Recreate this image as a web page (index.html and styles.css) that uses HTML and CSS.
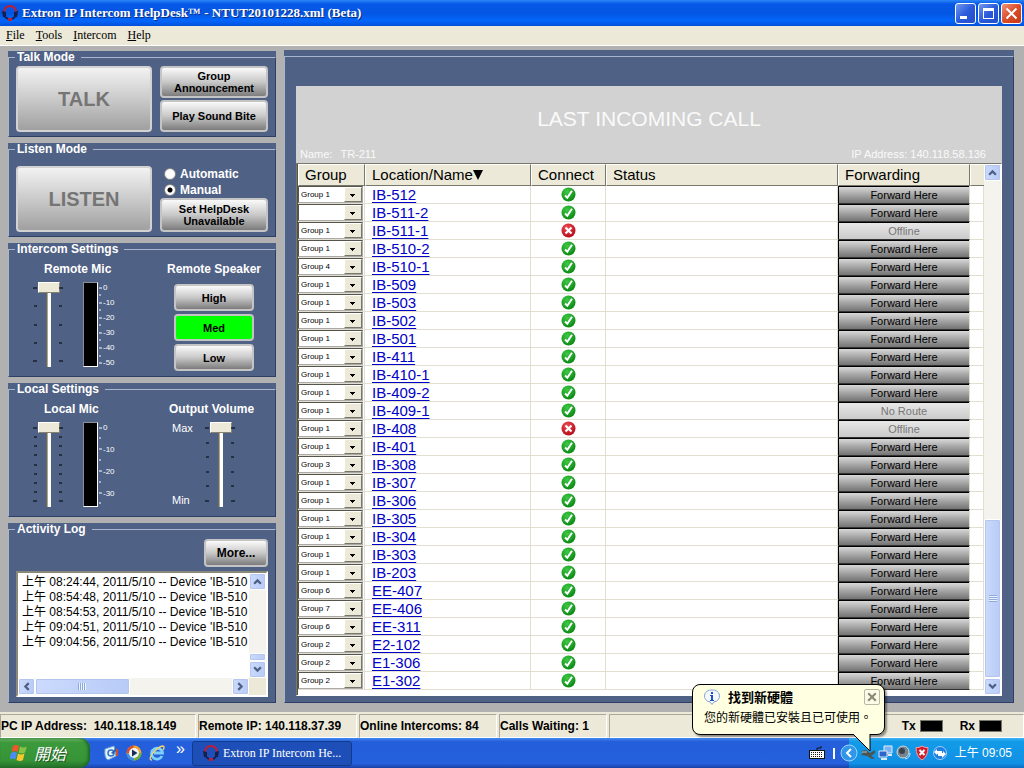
FILE: index.html
```html
<!DOCTYPE html>
<html lang="en">
<head>
<meta charset="utf-8">
<title>Extron IP Intercom HelpDesk</title>
<link rel="stylesheet" href="styles.css">
</head>
<body>
<svg class="defs" aria-hidden="true">
  <defs>
    <radialGradient id="green" cx="40%" cy="30%" r="70%"><stop offset="0" stop-color="#3fc846"/><stop offset="1" stop-color="#0c8a14"/></radialGradient>
    <radialGradient id="red" cx="40%" cy="30%" r="70%"><stop offset="0" stop-color="#ef4a52"/><stop offset="1" stop-color="#b80d1c"/></radialGradient>
    <symbol id="ok" viewBox="0 0 15 15"><circle cx="7.5" cy="7.5" r="7" fill="url(#green)"/><path d="M4 8.500l2.300 2.200L11 3.800" fill="none" stroke="#fff" stroke-width="2"/></symbol>
    <symbol id="bad" viewBox="0 0 15 15"><circle cx="7.5" cy="7.5" r="7" fill="url(#red)"/><path d="M4.500 4.500l6 6M10.500 4.500l-6 6" stroke="#fff" stroke-width="2.200"/></symbol>
    <symbol id="headset" viewBox="0 0 16 16"><path d="M2 8Q2 1 8 1t6 7" fill="none" stroke="#b8203a" stroke-width="2"/><path d="M0 6l4 1v5H1zM16 6l-4 1v5h3z" fill="#14204c"/><path d="M3 12l3 2M13 12l-3 2" fill="none" stroke="#16204a" stroke-width="2"/><path d="M6 13h4v3H6z" fill="#b8203a"/></symbol>
    <symbol id="up" viewBox="0 0 8 8"><path d="M1 6l3-3 3 3" fill="none" stroke="#4d6185" stroke-width="2"/></symbol>
    <symbol id="down" viewBox="0 0 8 8"><path d="M1 2l3 3 3-3" fill="none" stroke="#4d6185" stroke-width="2"/></symbol>
    <symbol id="left" viewBox="0 0 8 8"><path d="M6 1L3 4l3 3" fill="none" stroke="#4d6185" stroke-width="2"/></symbol>
    <symbol id="right" viewBox="0 0 8 8"><path d="M2 1l3 3-3 3" fill="none" stroke="#4d6185" stroke-width="2"/></symbol>
  </defs>
</svg>

<header class="titlebar">
  <svg class="icon16"><use href="#headset"/></svg>
  <h1>Extron IP Intercom HelpDesk™ - NTUT20101228.xml (Beta)</h1>
  <div class="window-buttons">
    <button aria-label="Minimize"><svg viewBox="0 0 19 19"><path d="M4 12h7v3H4z" fill="#fff"/></svg></button>
    <button aria-label="Maximize"><svg viewBox="0 0 19 19"><path d="M4 4h11v11H4zM5 7v7h9V7z" fill="#fff" fill-rule="evenodd"/></svg></button>
    <button class="close" aria-label="Close"><svg viewBox="0 0 19 19"><path d="M4.500 4.500l10 10M14.500 4.500l-10 10" stroke="#fff" stroke-width="2"/></svg></button>
  </div>
</header>

<nav class="menubar">
  <button><u>F</u>ile</button><button><u>T</u>ools</button><button><u>I</u>ntercom</button><button><u>H</u>elp</button>
</nav>

<main class="workspace">
  <div class="sidebar">
    <fieldset class="panel">
      <legend>Talk Mode</legend>
      <div class="mode">
        <button class="push big" disabled>TALK</button>
        <div class="stack">
          <button class="push">Group<br>Announcement</button>
          <button class="push">Play Sound Bite</button>
        </div>
      </div>
    </fieldset>

    <fieldset class="panel roomy">
      <legend>Listen Mode</legend>
      <div class="mode">
        <button class="push big" disabled>LISTEN</button>
        <div class="stack tight">
          <label class="radio"><input type="radio" name="listen">Automatic</label>
          <label class="radio"><input type="radio" name="listen" checked>Manual</label>
          <button class="push">Set HelpDesk<br>Unavailable</button>
        </div>
      </div>
    </fieldset>

    <fieldset class="panel settings">
      <legend>Intercom Settings</legend>
      <div class="columns">
        <div class="mic">
          <label for="remote-mic">Remote Mic</label>
          <div class="levels">
            <div class="slider">
              <svg class="ticks"><path d="M0 6h4M1 24h3M1 43h3M1 61h3M0 79h4"/></svg>
              <input id="remote-mic" type="range" value="100">
              <svg class="ticks"><path d="M0 6h4M0 24h3M0 43h3M0 61h3M0 79h4"/></svg>
            </div>
            <div class="meter"></div>
            <svg class="scale-ticks"><path d="M0 6h3M0 13h2M0 21h3M0 28h2M0 36h3M0 43h2M0 51h3M0 58h2M0 66h3M0 74h2M0 81h3"/></svg>
            <div class="scale"><span>0</span><span>-10</span><span>-20</span><span>-30</span><span>-40</span><span>-50</span></div>
          </div>
        </div>
        <div class="speaker">
          <span>Remote Speaker</span>
          <button class="push">High</button>
          <button class="push active">Med</button>
          <button class="push">Low</button>
        </div>
      </div>
    </fieldset>

    <fieldset class="panel settings">
      <legend>Local Settings</legend>
      <div class="columns">
        <div class="mic">
          <label for="local-mic">Local Mic</label>
          <div class="levels">
            <div class="slider">
              <svg class="ticks"><path d="M0 6h4M1 15h3M1 24h3M1 33h3M1 43h3M1 52h3M1 61h3M1 70h3M0 79h4"/></svg>
              <input id="local-mic" type="range" value="100">
              <svg class="ticks"><path d="M0 6h4M0 15h3M0 24h3M0 33h3M0 43h3M0 52h3M0 61h3M0 70h3M0 79h4"/></svg>
            </div>
            <div class="meter"></div>
            <svg class="scale-ticks"><path d="M0 6h3M0 16h2M0 27h3M0 38h2M0 49h3M0 60h2M0 71h3M0 81h2"/></svg>
            <div class="scale local"><span>0</span><span>-10</span><span>-20</span><span>-30</span></div>
          </div>
        </div>
        <div class="volume">
          <label for="volume">Output Volume</label>
          <div class="levels">
            <div class="limits"><span>Max</span><span>Min</span></div>
            <div class="slider">
              <svg class="ticks"><path d="M0 6h4M1 21h3M1 35h3M1 50h3M1 64h3M0 79h4"/></svg>
              <input id="volume" type="range" value="100">
              <svg class="ticks"><path d="M0 6h4M0 21h3M0 35h3M0 50h3M0 64h3M0 79h4"/></svg>
            </div>
          </div>
        </div>
      </div>
    </fieldset>

    <fieldset class="panel activity">
      <legend>Activity Log</legend>
      <button class="push more">More...</button>
      <div class="log">
        <ul>
          <li>上午 08:24:44, 2011/5/10 -- Device 'IB-510</li>
          <li>上午 08:54:48, 2011/5/10 -- Device 'IB-510</li>
          <li>上午 08:54:53, 2011/5/10 -- Device 'IB-510</li>
          <li>上午 09:04:51, 2011/5/10 -- Device 'IB-510</li>
          <li>上午 09:04:56, 2011/5/10 -- Device 'IB-510</li>
        </ul>
        <div class="scroll vertical">
          <button aria-label="Up"><svg><use href="#up"/></svg></button>
          <div class="track"><div class="thumb small"></div></div>
          <button aria-label="Down"><svg><use href="#down"/></svg></button>
        </div>
        <div class="scroll horizontal">
          <button aria-label="Left"><svg><use href="#left"/></svg></button>
          <div class="track"><div class="thumb"><i class="grip"></i></div></div>
          <button aria-label="Right"><svg><use href="#right"/></svg></button>
        </div>
      </div>
    </fieldset>
  </div>

  <section class="panel directory">
    <div class="frame">
      <div class="last-call">
        <h2>LAST INCOMING CALL</h2>
        <p><span>Name:</span><span>TR-211</span><span class="ip">IP Address: 140.118.58.136</span></p>
      </div>
      <div class="grid">
        <div class="rows">
          <table>
            <colgroup><col class="c-group"><col class="c-name"><col class="c-connect"><col><col class="c-forward"><col class="c-end"></colgroup>
            <thead><tr><th>Group</th><th>Location/Name<svg class="sort" viewBox="0 0 10 10"><path d="M0 0h10L5 10z"/></svg></th><th>Connect</th><th>Status</th><th>Forwarding</th><th></th></tr></thead>
            <tbody id="devices"></tbody>
          </table>
        </div>
        <div class="scroll vertical">
          <button aria-label="Up"><svg><use href="#up"/></svg></button>
          <div class="track"><div class="thumb tall"><i class="grip"></i></div></div>
          <button aria-label="Down"><svg><use href="#down"/></svg></button>
        </div>
      </div>
    </div>
  </section>
</main>

<footer class="statusbar">
  <span class="s-pc">PC IP Address:&nbsp; 140.118.18.149</span>
  <span class="s-remote">Remote IP: 140.118.37.39</span>
  <span class="s-online">Online Intercoms: 84</span>
  <span class="s-calls">Calls Waiting: 1</span>
  <span class="s-lamps"><span class="lamp">Tx<i></i></span><span class="lamp">Rx<i></i></span></span>
</footer>

<div class="taskbar">
  <button class="start">
    <svg viewBox="0 0 18 18"><path d="M3 2q3-2 6 0L7.500 8q-3-2-6 0z" fill="#f0562a"/><path d="M10 2.500q3 2 7 0L15 8.500q-3 2-6.500 0z" fill="#85c443"/><path d="M1 9q3-2 6 0l-1.500 6.500q-3-2-6 0z" fill="#4a8ef5"/><path d="M8 9.500q3 2 6.500 0L13 16q-3 2-6.500 0z" fill="#fbc52c"/></svg>
    開始
  </button>
  <div class="quick">
    <svg viewBox="0 0 16 16"><path d="M2 4l9-3 2 10-8 4q-4-2-3-11z" fill="#e8f3fb" stroke="#6fa6d8"/><circle cx="8" cy="8" r="3" fill="none" stroke="#2a78c8" stroke-width="1.500"/><path d="M8 8l6-6 1 2-5 5z" fill="#2c64b4"/><path d="M13 4h2v7h-2z" fill="#d9492c"/></svg>
    <svg viewBox="0 0 16 16"><circle cx="8" cy="8" r="7.500" fill="#f3a52b"/><path d="M8 .5A7.500 7.500 0 0 0 .5 8H5z" fill="#d84c2c"/><path d="M.5 8A7.500 7.500 0 0 0 8 15.500V11z" fill="#3f8fe0"/><path d="M8 15.500A7.500 7.500 0 0 0 15.500 8H11z" fill="#64b03c"/><circle cx="8" cy="8" r="5" fill="#eef4fb"/><path d="M6 4.500l5.500 3.500L6 11.500z" fill="#1b2c58"/></svg>
    <svg viewBox="0 0 16 16"><path d="M13 11a5.500 5.500 0 1 1 .5-3H5" fill="none" stroke="#7cd0ff" stroke-width="2.800"/><path d="M3 15Q-1 15 3.500 8.500 9 2 13.500 1q3 0 .5 4" fill="none" stroke="#f2d468" stroke-width="1.300"/></svg>
    <span>»</span>
  </div>
  <button class="task"><svg class="icon16"><use href="#headset"/></svg><span>Extron IP Intercom He...</span></button>
  <svg class="keyboard" viewBox="0 0 17 14"><path d="M8 5V2h4V0" fill="none" stroke="#111"/><rect x=".5" y="4.500" width="15" height="8" fill="#fff" stroke="#111"/><path d="M2 6.500h12M2 8.500h12M2 10.500h12" stroke="#111" stroke-dasharray="1 1"/></svg>
  <i class="bar"></i>
  <div class="tray">
    <svg class="chevron" viewBox="0 0 18 18"><circle cx="9" cy="9" r="8" fill="#2f96ea" stroke="#9dd3fb"/><path d="M11 5L7 9l4 4" fill="none" stroke="#fff" stroke-width="2"/></svg>
    <svg viewBox="0 0 16 16"><path d="M1 6l5-1 4 3 5-3v3l-4 3 4 2-3 1-5-3-6-1 2-2z" fill="#4b5550"/><path d="M2 7l5 0" stroke="#b6c2bc"/></svg>
    <svg viewBox="0 0 16 16"><path d="M6 1h8v7H6z" fill="#79b2f0" stroke="#e2eefa"/><path d="M1 6h8v6H1z" fill="#2f65c8" stroke="#dcebfa"/><path d="M3 14h6M10 10h4" stroke="#dcebfa" stroke-width="2"/></svg>
    <svg viewBox="0 0 16 16"><circle cx="7" cy="7" r="6" fill="#79838c" stroke="#d0d8de"/><circle cx="6" cy="6" r="3" fill="#39434e"/><path d="M9 14q5-1 5-6" fill="none" stroke="#cfe4fb"/></svg>
    <svg viewBox="0 0 16 16"><path d="M8 1q3 2 6 1.500 0 9-6 12.500Q2 11.500 2 2.500 5 3 8 1z" fill="#d01c2c" stroke="#f0a0a4"/><path d="M5.500 5l5 5M10.500 5l-5 5" stroke="#fff" stroke-width="2"/></svg>
    <svg viewBox="0 0 16 16"><circle cx="8" cy="8" r="6.500" fill="#1f7ee0" stroke="#9ccfff"/><path d="M2 7l3-3v2h5v2h1V6l3 3-4 4v-2H6V9H5v1z" fill="#fff"/></svg>
    <time>上午 09:05</time>
  </div>
</div>

<aside class="balloon" role="status">
  <svg class="tail" viewBox="0 0 20 20"><path d="M0 0L17 17V0" fill="#ffffe1" stroke="#000"/></svg>
  <div class="balloon-head">
    <svg viewBox="0 0 16 16"><path d="M8 1a6.500 6 0 0 1 2 12l-2 2.500L6 13A6.500 6 0 0 1 8 1z" fill="#f3f8ff" stroke="#8ba6cc"/><path d="M7 3h2v2H7zM6 6h3v5h1v1H6v-1h1V7H6z" fill="#1e50c0"/></svg>
    <strong>找到新硬體</strong>
    <button aria-label="Dismiss"><svg viewBox="0 0 13 13"><path d="M3 3l7 7M10 3l-7 7" stroke="#8a8a7c" stroke-width="2"/></svg></button>
  </div>
  <p>您的新硬體已安裝且已可使用。</p>
</aside>
<script src="script.js"></script>
</body>
</html>
```
FILE: styles.css
```css
* { box-sizing: border-box; }
body {
  margin: 0;
  min-height: 100vh;
  display: flex;
  flex-direction: column;
  position: relative;
  background: #b1b1b1;
  font: 12px/15px "Liberation Sans", "Noto Sans CJK TC", sans-serif;
  color: #000;
}
button, input, select { font: inherit; color: inherit; margin: 0; padding: 0; border: 0; }
svg { display: block; flex: none; }
.defs { position: absolute; width: 0; height: 0; }
.icon16 { width: 16px; height: 16px; }

.titlebar {
  display: flex;
  align-items: center;
  gap: 4px;
  height: 26px;
  padding: 0 2px;
  background: linear-gradient(#2a86f8, #0659e6 15%, #0355e2 50%, #0366fb 80%, #0350d8);
}
.titlebar h1 {
  flex: 1;
  margin: 0;
  font: bold 13px/16px "Liberation Serif", serif;
  color: #fff;
  text-shadow: 1px 1px #0b2c80;
  white-space: nowrap;
}
.window-buttons { display: flex; gap: 2px; }
.window-buttons button {
  width: 21px;
  height: 21px;
  border: 1px solid #fff;
  border-radius: 3px;
  background: linear-gradient(135deg, #7399ee, #2a5bdc 50%, #2450c8);
}
.window-buttons .close { background: linear-gradient(135deg, #ee9479, #dc4c28 50%, #c23a14); }

.menubar {
  display: flex;
  gap: 11px;
  height: 20px;
  padding: 0 6px;
  background: #ece9d8;
  border-bottom: 1px solid #fff;
}
.menubar button { background: none; font: 12px/19px "Liberation Serif", serif; }

.workspace {
  flex: 1;
  display: flex;
  gap: 8px;
  padding: 4px 10px 9px 8px;
}
.sidebar { flex: none; width: 268px; display: flex; flex-direction: column; gap: 5px; }
.panel {
  margin: 0;
  min-width: 0;
  padding: 2px 7px 4px;
  background: #4f6185;
  border: 1px solid #a9b6ce;
  border-right-color: #2d3f66;
  border-bottom-color: #2d3f66;
  box-shadow: 0 -6px #4f6185;
}
legend {
  margin-left: -1px;
  padding: 0 6px 0 2px;
  font: bold 12px/14px "Liberation Sans", sans-serif;
  color: #fff;
}
.roomy { padding-top: 10px; }
.mode { display: grid; grid-template-columns: 136px 1fr; gap: 8px; }
.stack { display: grid; grid-template-rows: 32px 32px; gap: 2px; }
.stack.tight { grid-template-rows: 16px 16px 34px; gap: 0; }
.push {
  border: 2px solid #c4c4c4;
  border-radius: 4px;
  background: linear-gradient(#fafafa, #c8c8c8 50%, #7c7c7c);
  font: bold 11px/12px "Liberation Sans", sans-serif;
  color: #000;
}
.push.big {
  height: 66px;
  border-color: #d2d2d2;
  background: linear-gradient(#f2f2f2, #cacaca 50%, #a0a0a0);
  font-size: 20px;
  color: #757575;
}
.push.active { background: #00ff00; }
.radio { display: flex; align-items: center; gap: 4px; padding-left: 4px; font-weight: bold; color: #fff; }
.radio input {
  appearance: none;
  width: 12px;
  height: 12px;
  border: 1px solid #808080;
  border-radius: 50%;
  background: #fff;
}
.radio input:checked { background: radial-gradient(circle, #000 2px, #fff 3px); }

.settings { padding: 6px 7px 5px; }
.columns { display: grid; grid-template-columns: 134px 1fr; font: bold 12px/15px "Liberation Sans", sans-serif; color: #fff; }
.mic, .volume { display: flex; flex-direction: column; gap: 5px; }
.mic > label { padding-left: 28px; }
.levels { display: flex; height: 85px; margin: 0 0 4px 17px; }
.slider { display: flex; }
.ticks { width: 4px; height: 85px; fill: none; stroke: #000; stroke-width: 1px; }
input[type="range"] {
  appearance: none;
  writing-mode: vertical-lr;
  direction: rtl;
  width: 22px;
  height: 85px;
  background: transparent;
}
input[type="range"]::-webkit-slider-runnable-track {
  width: 5px;
  height: 85px;
  background: linear-gradient(90deg, #6b6b5c 1px, #aaa894 1px, #aaa894 2px, #fff 2px);
}
input[type="range"]::-webkit-slider-thumb {
  appearance: none;
  width: 22px;
  height: 11px;
  margin-left: -8px;
  border: 1px solid;
  border-color: #fff #85826f #85826f #fff;
  background: #ece9d8;
}
.meter { width: 15px; margin: 0 1px 0 20px; border: 1px solid #fff; border-color: #8a8f9a #fff #fff #8a8f9a; background: #000; }
.scale-ticks { width: 4px; height: 85px; fill: none; stroke: #fff; stroke-width: 1px; }
.scale {
  display: flex;
  flex-direction: column;
  gap: 7px;
  padding-top: 2px;
  font: 8px/8px "Liberation Sans", sans-serif;
}
.scale.local { gap: 14px; }
.speaker { display: grid; grid-template-rows: 19px 27px 27px 27px; gap: 3px; justify-items: center; padding: 0 2px 0 12px; white-space: nowrap; }
.speaker .push { width: 80px; }
.volume > label { padding-left: 19px; white-space: nowrap; }
.volume .levels { margin-left: 22px; }
.limits {
  display: flex;
  flex-direction: column;
  justify-content: space-between;
  width: 33px;
  font: 11px/13px "Liberation Sans", sans-serif;
}

.activity { flex: 1; padding: 3px 7px 5px; }
.more { display: block; width: 64px; height: 28px; margin: 0 0 4px auto; font-size: 12px; }
.log {
  display: grid;
  grid-template: 105px 17px / minmax(0, 1fr) 17px;
  border: 2px solid;
  border-color: #8a8878 #fff #fff #8a8878;
  background: #ece9d8;
}
.log ul {
  margin: 0;
  padding: 2px 0 0 4px;
  list-style: none;
  background: #fff;
  white-space: nowrap;
  overflow: hidden;
}
.log li { height: 15px; }
.scroll { display: flex; background: #f4f3ee; }
.scroll.vertical { flex-direction: column; width: 17px; }
.scroll button, .thumb {
  display: flex;
  align-items: center;
  justify-content: center;
  border: 1px solid #fff;
  border-radius: 2px;
  background: linear-gradient(90deg, #cbdafd, #b8cbf6);
  box-shadow: inset 0 0 0 1px #b4c6ee;
}
.scroll button { flex: none; width: 17px; height: 17px; }
.scroll button svg { width: 9px; height: 9px; }
.track { flex: 1; display: flex; }
.vertical .track { flex-direction: column; justify-content: flex-end; }
.horizontal .thumb { width: 48%; }
.thumb.small { height: 8px; }
.thumb.tall { height: 32%; }
.grip { width: 8px; height: 7px; background: repeating-linear-gradient(90deg, #8fa9df 0 1px, #edf2ff 1px 2px); }
.tall .grip { background: repeating-linear-gradient(#8fa9df 0 1px, #edf2ff 1px 2px); }

.directory { flex: 1; display: flex; border: 0; padding: 6px 0 0; box-shadow: none; }
.frame {
  flex: 1;
  min-width: 0;
  display: flex;
  flex-direction: column;
  padding: 29px 11px 6px;
  border: 1px solid;
  border-color: #a9b6ce #2d3f66 #2d3f66 #a9b6ce;
}
.last-call { background: #d2d2d2; color: #fafafa; }
.last-call h2 { margin: 0; padding: 22px 0 18px; font: 21px/22px "Liberation Sans", sans-serif; text-align: center; }
.last-call p { display: flex; gap: 8px; margin: 0; padding: 0 16px 2px 4px; font-size: 11px; line-height: 13px; }
.last-call .ip { margin-left: auto; }
.grid { flex: 1; display: flex; border: 1px solid; border-color: #77776c #fff #fff #77776c; background: #fff; }
.rows { flex: 1; min-width: 0; padding-bottom: 3px; border-left: 1px solid #55554c; }
table { width: 100%; table-layout: fixed; border-collapse: separate; border-spacing: 0; }
.c-group { width: 67px; }
.c-name { width: 166px; }
.c-connect { width: 75px; }
.c-forward { width: 132px; }
.c-end { width: 14px; }
th {
  height: 22px;
  padding: 0 6px;
  border: 1px solid;
  border-color: #fff #77776c #77776c #fff;
  background: #ece9d8;
  font: 15px/18px "Liberation Sans", sans-serif;
  text-align: left;
  white-space: nowrap;
}
th:last-child { border-right: 0; }
.sort { display: inline-block; width: 10px; height: 10px; }
tbody td { height: 18px; padding: 0; border-right: 1px solid #e2dfd0; border-bottom: 1px solid #e2dfd0; line-height: 17px; }
tbody a { display: block; height: 17px; padding-left: 7px; font-size: 15px; color: #0000c8; text-decoration: none; }
tbody a span { text-decoration: underline; text-underline-offset: 2px; }
.state { display: block; width: 15px; height: 15px; margin: 0 auto; }
.pick { position: relative; display: flex; border: 1px solid; border-color: #55554c #aaa #aaa #55554c; height: 17px; margin-right: 1px; }
.pick select {
  appearance: none;
  width: 100%;
  padding-left: 2px;
  border-radius: 0;
  background: #fff;
  font: 8px/14px "Liberation Sans", sans-serif;
}
.pick::after {
  content: "";
  position: absolute;
  inset: 0 0 0 auto;
  width: 16px;
  border: 1px solid;
  border-color: #fff #77776c #77776c #fff;
  background: linear-gradient(#000, #000) 5px 6px / 5px 1px no-repeat, linear-gradient(#000, #000) 6px 7px / 3px 1px no-repeat, linear-gradient(#000, #000) 7px 8px / 1px 1px no-repeat, #ece9d8;
  pointer-events: none;
}
.forward {
  display: block;
  width: 100%;
  height: 17px;
  border: 1px solid #000;
  border-width: 1px 0 0 1px;
  background: linear-gradient(#d8d8d8, #a4a4a4 50%, #747474);
  font-size: 11px;
  line-height: 15px;
}
tbody td:nth-child(5) { border-bottom-color: #333; }
.forward:disabled { background: linear-gradient(#e8e8e8, #cacaca); color: #777; }

.statusbar { display: flex; gap: 2px; height: 26px; background: #ece9d8; padding-top: 2px; font: bold 12px/22px "Liberation Sans", sans-serif; white-space: nowrap; }
.statusbar > span { border: 1px solid; border-color: #aca899 #fff #fff #aca899; }
.s-pc { width: 196px; }
.s-remote { width: 159px; }
.s-online { width: 138px; }
.s-calls { width: 108px; }
.statusbar .s-lamps { flex: 1; display: flex; justify-content: flex-end; gap: 17px; padding-right: 21px; }
.lamp { display: flex; align-items: center; gap: 4px; }
.lamp i { width: 23px; height: 12px; border: 1px solid #77776c; background: #000; }

.taskbar {
  display: flex;
  align-items: center;
  height: 30px;
  background: linear-gradient(#4489f0, #245edb 12%, #2560dd 85%, #1941a5);
  color: #fff;
}
.start {
  display: flex;
  align-items: center;
  gap: 6px;
  width: 90px;
  height: 30px;
  padding-left: 10px;
  border-radius: 0 10px 10px 0;
  background: linear-gradient(#6fb66c, #3c9a3c 15%, #369336 75%, #23702a);
  box-shadow: inset -2px 0 3px #1e6424;
  font: italic 16px/20px "Noto Sans CJK TC", sans-serif;
  color: #fff;
  text-shadow: 1px 1px #1c5420;
}
.start svg { width: 18px; height: 18px; }
.quick { display: flex; align-items: center; gap: 7px; width: 102px; padding-left: 13px; }
.quick svg { width: 16px; height: 16px; }
.quick span { padding: 0 0 10px 4px; font-size: 16px; }
.task {
  display: flex;
  align-items: center;
  gap: 4px;
  width: 160px;
  height: 25px;
  padding-left: 10px;
  border: 1px solid #143a8c;
  border-radius: 3px;
  background: #1e4fb8;
  font: 12px/16px "Liberation Serif", serif;
  color: #fff;
}
.keyboard { width: 17px; height: 14px; margin-left: auto; }
.bar { width: 2px; height: 11px; margin: 0 14px 0 7px; background: #fff; }
.tray {
  display: flex;
  align-items: center;
  gap: 2px;
  height: 30px;
  padding-right: 12px;
  background: linear-gradient(#3fb4f5, #129be8 12%, #1290e4 85%, #0d6cc0);
}
.tray svg { width: 16px; height: 16px; }
.tray .chevron { width: 18px; height: 18px; margin-left: -9px; }
.tray time { padding-left: 5px; white-space: nowrap; }

.balloon {
  position: absolute;
  right: 139px;
  bottom: 33px;
  width: 193px;
  height: 51px;
  padding: 4px 4px 4px 11px;
  border: 1px solid #000;
  border-radius: 8px;
  background: #ffffe1;
  box-shadow: 2px 2px 2px #0006;
}
.tail { position: absolute; right: 11px; top: 49px; width: 20px; height: 20px; }
.balloon-head { display: flex; align-items: center; gap: 8px; }
.balloon-head svg { width: 16px; height: 16px; }
.balloon strong { flex: 1; font: bold 13px/16px "Noto Sans CJK TC", sans-serif; }
.balloon button { width: 16px; height: 16px; border: 1px solid #b8b8a4; border-radius: 2px; background: #fbfbe8; }
.balloon button svg { width: 14px; height: 14px; }
.balloon p { margin: 4px 0 0; font: 12px/16px "Noto Sans CJK TC", sans-serif; white-space: nowrap; }
```
FILE: script.js
```js
const devices = [
  ["Group 1", "IB-512"], ["", "IB-511-2"], ["Group 1", "IB-511-1", "Offline"], ["Group 1", "IB-510-2"],
  ["Group 4", "IB-510-1"], ["Group 1", "IB-509"], ["Group 1", "IB-503"], ["Group 1", "IB-502"],
  ["Group 1", "IB-501"], ["Group 1", "IB-411"], ["Group 1", "IB-410-1"], ["Group 1", "IB-409-2"],
  ["Group 1", "IB-409-1", "No Route"], ["Group 1", "IB-408", "Offline"], ["Group 1", "IB-401"], ["Group 3", "IB-308"],
  ["Group 1", "IB-307"], ["Group 1", "IB-306"], ["Group 1", "IB-305"], ["Group 1", "IB-304"],
  ["Group 1", "IB-303"], ["Group 1", "IB-203"], ["Group 6", "EE-407"], ["Group 7", "EE-406"],
  ["Group 6", "EE-311"], ["Group 2", "E2-102"], ["Group 2", "E1-306"], ["Group 2", "E1-302"]
];

document.getElementById("devices").innerHTML = devices.map(([group, name, problem]) => `
  <tr>
    <td><div class="pick"><select aria-label="Group of ${name}"><option>${group}</option></select></div></td>
    <td><a href="#"><span>${name}</span></a></td>
    <td><svg class="state"><use href="#${problem === "Offline" ? "bad" : "ok"}"/></svg></td>
    <td></td>
    <td><button class="forward"${problem ? " disabled" : ""}>${problem || "Forward Here"}</button></td>
    <td></td>
  </tr>`).join("");
```
